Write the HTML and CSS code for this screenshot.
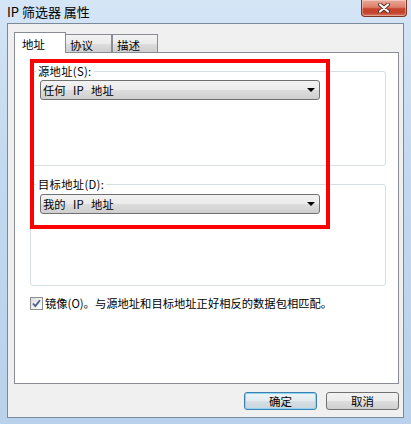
FILE: index.html
```html
<!DOCTYPE html>
<html lang="zh-CN">
<head>
<meta charset="utf-8">
<title>IP 筛选器 属性</title>
<link rel="stylesheet" href="styles.css">
</head>
<body>
<div class="window">
  <div class="titlebar">
    <span class="title">IP 筛选器 属性</span>
    <div class="close">
      <svg width="12" height="10" viewBox="0 0 12 10">
        <path d="M2 1.5 L10 8.5 M10 1.5 L2 8.5" stroke="#5a2a22" stroke-width="4" stroke-linecap="round"/>
        <path d="M2 1.5 L10 8.5 M10 1.5 L2 8.5" stroke="#ffffff" stroke-width="2.2" stroke-linecap="round"/>
      </svg>
    </div>
  </div>
  <div class="client">
    <div class="tabs">
      <div class="tab active">地址</div>
      <div class="tab">协议</div>
      <div class="tab">描述</div>
    </div>
    <div class="panel">
      <div class="group g1">
        <span class="group-label">源地址(S):</span>
        <div class="combo"><span class="combo-text">任何 IP 地址</span><i class="arrow"></i></div>
      </div>
      <div class="group g2">
        <span class="group-label">目标地址(D):</span>
        <div class="combo"><span class="combo-text">我的 IP 地址</span><i class="arrow"></i></div>
      </div>
      <label class="check-row">
        <span class="checkbox">
          <svg width="11" height="11" viewBox="0 0 11 11"><path d="M2 5.5 L4.3 8 L9 2.2" fill="none" stroke="#4a5e8c" stroke-width="1.8"/></svg>
        </span>
        <span>镜像(O)。与源地址和目标地址正好相反的数据包相匹配。</span>
      </label>
    </div>
    <div class="buttons">
      <button class="btn default">确定</button>
      <button class="btn">取消</button>
    </div>
  </div>
  <div class="highlight"></div>
</div>
</body>
</html>
```

FILE: styles.css
```css
* { box-sizing: border-box; }

body {
  margin: 0;
  font-family: "Noto Sans CJK SC", "Liberation Sans", sans-serif;
  font-size: 11.3px;
  color: #000;
}

.window {
  position: relative;
  width: 411px;
  height: 424px;
  padding: 0 7px 6px 7px;
  display: flex;
  flex-direction: column;
  background: linear-gradient(to bottom, #d4e5f6 0%, #c3d9ef 40%, #b9d1ea 100%);
  overflow: hidden;
}

.titlebar {
  height: 23px;
  flex: none;
  display: flex;
  justify-content: space-between;
  align-items: flex-start;
}

.title {
  font-size: 13px;
  line-height: 16px;
  margin-top: 4px;
}

.close {
  width: 46px;
  height: 17px;
  margin-right: -3px;
  border: 1px solid #7d3326;
  border-top: none;
  border-radius: 0 0 4px 4px;
  background: linear-gradient(to bottom, #e9a898 0%, #dd7f6a 45%, #c8432c 55%, #c2432e 80%, #d9785f 100%);
  display: flex;
  align-items: center;
  justify-content: center;
  box-shadow: inset 0 0 0 1px rgba(255,255,255,0.35);
}

.close svg { display: block; margin-top: -1px; }

.client {
  flex: 1;
  border: 1px solid #7b8a9b;
  background: #f0f0f0;
  padding: 8px 4px 0 6px;
  display: flex;
  flex-direction: column;
}

.tabs {
  height: 20px;
  flex: none;
  display: flex;
  align-items: flex-end;
  position: relative;
  z-index: 1;
}

.tab {
  height: 18px;
  width: 46px;
  border: 1px solid #898c95;
  border-bottom: none;
  padding: 2px 0 0 4px;
  line-height: 16px;
  font-size: 11.5px;
  background: linear-gradient(to bottom, #f3f3f3 0%, #ebebeb 50%, #dddddd 51%, #cfcfcf 100%);
}

.tab.active {
  width: 52px;
  height: 21px;
  margin-bottom: -1px;
  padding: 3px 0 0 7px;
  background: #fff;
}

.tab.active + .tab { border-left: none; }

.panel {
  height: 332px;
  flex: none;
  border: 1px solid #898c95;
  background: #fff;
  padding: 0 12px 0 15px;
  display: flex;
  flex-direction: column;
}

.group {
  border: 1px solid #d5dfe5;
  border-radius: 3px;
  display: flex;
  flex-direction: column;
  align-items: flex-start;
}

.g1 { margin-top: 18px; height: 95px; }
.g2 { margin-top: 18px; height: 102px; }

.group-label {
  margin: -8px 0 0 5px;
  padding: 0 2px;
  line-height: 14px;
  height: 14px;
  background: #fff;
  white-space: nowrap;
  letter-spacing: 0.3px;
}

.combo {
  margin: 2px 0 0 9px;
  width: 280px;
  height: 20px;
  border: 1px solid #707070;
  border-radius: 3px;
  background: linear-gradient(to bottom, #f2f2f2 0%, #ebebeb 50%, #dddddd 51%, #cfcfcf 100%);
  padding: 0 4px 0 2px;
  display: flex;
  align-items: center;
  justify-content: space-between;
  line-height: 16px;
}

.combo-text { word-spacing: 5px; white-space: pre; }

.g2 .combo { margin-top: 3px; }

.arrow {
  width: 0;
  height: 0;
  border-left: 4px solid transparent;
  border-right: 4px solid transparent;
  border-top: 4px solid #000;
}

.check-row {
  margin-top: 10px;
  display: flex;
  align-items: center;
  gap: 2px;
  line-height: 14px;
  white-space: nowrap;
}

.checkbox {
  width: 13px;
  height: 13px;
  flex: none;
  border: 1px solid #8e8f8f;
  background: linear-gradient(135deg, #dcdcdc 0%, #f6f6f6 70%, #ffffff 100%);
  display: flex;
  align-items: center;
  justify-content: center;
}

.checkbox svg { display: block; }

.buttons {
  margin-top: 8px;
  display: flex;
  justify-content: flex-end;
  gap: 9px;
}

.btn {
  width: 73px;
  height: 18px;
  padding: 0;
  font-family: inherit;
  font-size: 11.5px;
  line-height: 14px;
  color: #000;
  border: 1px solid #707070;
  border-radius: 3px;
  background: linear-gradient(to bottom, #f2f2f2 0%, #ebebeb 50%, #dddddd 51%, #cfcfcf 100%);
}

.btn.default {
  border-color: #3c7fb1;
  box-shadow: inset 0 0 0 1px #8fd3f3;
  background: linear-gradient(to bottom, #edf3f6 0%, #e3ebef 50%, #d5dfe5 51%, #c9d5dc 100%);
}

.highlight {
  position: absolute;
  left: 30px;
  top: 59px;
  width: 300px;
  height: 170px;
  border: 4px solid #ff0000;
}
```
